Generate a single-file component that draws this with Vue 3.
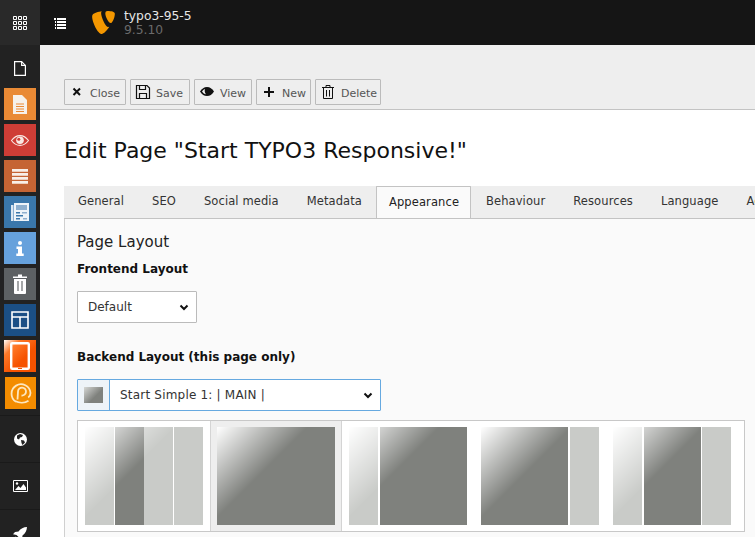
<script setup>
const buttons = [
  { label: 'Close', icon: 'close', width: 61.5 },
  { label: 'Save', icon: 'save', width: 59.5 },
  { label: 'View', icon: 'view', width: 57.5 },
  { label: 'New', icon: 'plus', width: 54.5 },
  { label: 'Delete', icon: 'trash', width: 66 }
]
const tabs = ['General', 'SEO', 'Social media', 'Metadata', 'Appearance', 'Behaviour', 'Resources', 'Language', 'Access']
const layouts = [
  { cols: [['l', 29], ['d', 29], ['m', 29], ['m', 29]] },
  { cols: [['d', 118]], active: true },
  { cols: [['l', 29], ['d', 87]] },
  { cols: [['d', 87], ['m', 29]] },
  { cols: [['l', 29], ['d', 57], ['m', 29]] }
]
</script>

<template>
  <div class="app">
    <aside class="sidebar">
      <div class="side-top">
        <svg width="14" height="14" viewBox="0 0 14 14"><path d="M.5.5h3v3h-3zM5.500.5h3v3h-3zM10.500.5h3v3h-3zM.5 5.500h3v3h-3zM5.500 5.500h3v3h-3zM10.500 5.500h3v3h-3zM.5 10.500h3v3h-3zM5.500 10.500h3v3h-3zM10.500 10.500h3v3h-3z" fill="none" stroke="#fff" stroke-width="1"/></svg>
      </div>
      <div class="side-doc">
        <svg width="12" height="15" viewBox="0 0 12 15"><path d="M.6.6h7l3.800 3.800v10H.6z" fill="#222" stroke="#fff" stroke-width="1.200"/><path d="M7.600.6v3.800h3.800" fill="none" stroke="#fff" stroke-width="1.100"/></svg>
      </div>
      <div class="mods">
        <div class="mod orange">
          <svg width="14" height="19" viewBox="0 0 14 19"><path d="M0 0h9l5 5v14H0z" fill="#f6f1ea"/><path d="M3 9h8M3 11.500h8M3 14h8M3 16.500h8" stroke="#e98a35" stroke-width="1.100"/></svg>
        </div>
        <div class="mod red">
          <svg width="18" height="11" viewBox="0 0 18 11"><path d="M.5 5.500C3 2 5.500.6 9 .6s6 1.400 8.500 4.900C15 9 12.500 10.400 9 10.400S3 9 .5 5.500z" fill="none" stroke="#f8e8e4" stroke-width="1.100"/><circle cx="9" cy="5.300" r="3.800" fill="#f8e8e4"/><circle cx="7.800" cy="4.300" r="1.500" fill="#cf3d36"/></svg>
        </div>
        <div class="mod brown">
          <svg width="16" height="15" viewBox="0 0 16 15" fill="#f8efe8"><path d="M0 0h16v2.800H0zM0 4h16v2.800H0zM0 8h16v2.800H0zM0 12h16v2.800H0z"/></svg>
        </div>
        <div class="mod blue">
          <svg width="18" height="18" viewBox="0 0 18 18"><path d="M0 2h2.500v16H0z" fill="#dbe7f2"/><path d="M3 0h15v18H3z" fill="#eef4f9"/><path d="M5 2h11v5H5z" fill="#8fb0cf"/><path d="M5 9h4v1.500H5zM5 12h7v1.500H5zM5 15h4v1.500H5z" fill="#3a77ab"/><path d="M11 9h5v1.500h-5zM12 15h4v1.500h-4z" fill="#8fb0cf"/></svg>
        </div>
        <div class="mod sky">
          <svg width="8" height="15" viewBox="0 0 8 15" fill="#fff"><circle cx="4" cy="2" r="2"/><path d="M.5 5.500H6v7h1.700V15H.3v-2.500H2V8H.5z"/></svg>
        </div>
        <div class="mod grey">
          <svg width="14" height="20" viewBox="0 0 14 20"><path d="M0 2.500h14V4H0zM5 .5h4v2H5z" fill="#fff"/><path d="M1 5h12v14a1 1 0 0 1-1 1H2a1 1 0 0 1-1-1z" fill="#fff"/><path d="M5 7v10M9 7v10" stroke="#5d6163" stroke-width="1.100"/></svg>
        </div>
        <div class="mod navy">
          <svg width="18" height="18" viewBox="0 0 18 18" fill="none" stroke="#fff" stroke-width="1.600"><path d="M1 1h16v16H1zM1 6h16M9 6v11"/></svg>
        </div>
        <div class="mod tablet">
          <svg width="20" height="28" viewBox="0 0 20 28"><rect x="1.200" y="1.200" width="17.600" height="25.600" rx="1" fill="none" stroke="#fff" stroke-width="2.400"/><path d="M8 26.500h4" stroke="#f65200" stroke-width="1"/></svg>
        </div>
        <div class="mod pown">
          <svg width="22" height="21" viewBox="0 0 22 21" fill="none" stroke="#fde7bf" stroke-width="1.800"><path d="M6 18.800A9.500 9.500 0 1 1 20.500 10c0 2-.8 3.500-2.300 4.500"/><path d="M7.500 16.500L8 8.500a4 4 0 1 1 3.500 4"/><path d="M5.500 18.300c4 2 9.500 1.700 13-.5"/></svg>
        </div>
      </div>
      <div class="side-row">
        <svg width="13" height="13" viewBox="0 0 13 13"><circle cx="6.500" cy="6.500" r="6.500" fill="#fff"/><path d="M3 2.500l3-1.500 3 1-1 2-2 .5-1 2-2-1zM7 7l3 .5 1 2-2.500 2.500L7.500 10z" fill="#222"/></svg>
      </div>
      <div class="side-row">
        <svg width="15" height="12" viewBox="0 0 15 12"><path d="M.5.5h14v11H.5z" fill="none" stroke="#fff"/><path d="M2 10l3.500-4 2 2 3-4L13 7.500V10z" fill="#fff"/><circle cx="4" cy="3.500" r="1.200" fill="#fff"/></svg>
      </div>
      <div class="side-row rocket">
        <svg width="14" height="14" viewBox="0 0 14 14" fill="#fff"><path d="M14 0c-.2 3.500-1.500 6.300-4.500 8.500L9 12 6.800 14 6 10.500 3.500 8 0 7.200 2 5l3.500-.5C7.700 1.500 10.500.2 14 0z"/><path d="M2.500 9.500L4.500 11.500 1 13z"/></svg>
      </div>
    </aside>

    <div class="main">
      <header class="topbar">
        <svg class="list-icon" width="12" height="11" viewBox="0 0 12 11" fill="#fff"><path d="M0 0h2v2H0zM3 0h9v2H3zM1 3h1v2H1zM3 3h9v2H3zM1 6h1v2H1zM3 6h9v2H3zM1 9h1v2H1zM3 9h9v2H3z"/></svg>
        <svg class="logo" width="23" height="23" viewBox="0 0 24 24" fill="#f49700"><path d="M18.080 16.539c-.356.105-.64.144-1.012.144-3.048 0-7.524-10.652-7.524-14.197 0-1.305.31-1.740.745-2.114C6.560.808 2.082 2.177.651 3.924c-.31.436-.497 1.120-.497 1.990C.154 11.447 6.064 24 10.233 24c1.928 0 5.181-3.170 7.847-7.461"/><path d="M16.136 0c3.855 0 7.710.622 7.710 2.798 0 4.415-2.800 9.765-4.230 9.765-2.549 0-5.720-7.090-5.720-9.641C13.896.747 14.702 0 16.136 0"/></svg>
        <div class="site">
          <div class="site-name">typo3-95-5</div>
          <div class="site-version">9.5.10</div>
        </div>
      </header>

      <div class="toolbar">
        <button v-for="b in buttons" :key="b.label" class="btn" :style="{ width: b.width + 'px' }">
          <svg v-if="b.icon === 'close'" class="ico" width="16" height="16" viewBox="0 0 16 16"><path d="M4.500 4.500l6.500 6.500M11 4.500L4.500 11" stroke="#111" stroke-width="2"/></svg>
          <svg v-else-if="b.icon === 'save'" class="ico" width="16" height="16" viewBox="0 0 16 16" fill="none" stroke="#111" stroke-width="1.200"><path d="M1.500 1.500h10.500l2.500 2.500v10.500h-13z"/><path d="M4.500 1.500v4h6v-4M4.500 14.500v-5h7v5"/></svg>
          <svg v-else-if="b.icon === 'view'" class="ico" width="16" height="16" viewBox="0 0 16 16"><path d="M1 7.500C3 4.500 5 3 8 3s5 1.500 7 4.500C13 10.500 11 12 8 12S3 10.500 1 7.500z" fill="#111"/><path d="M3 7.500C4.500 5.700 5.500 5 6 5c-.5 1.500-.5 3.500 1 5.200-1.500 0-3-1.200-4-2.700z" fill="#eee"/></svg>
          <svg v-else-if="b.icon === 'plus'" class="ico" width="16" height="16" viewBox="0 0 16 16"><path d="M8 3v10M3 8h10" stroke="#111" stroke-width="2"/></svg>
          <svg v-else class="ico" width="16" height="16" viewBox="0 0 16 16" fill="none" stroke="#111"><path d="M2 3.500h12M6 3.500v-2h4v2M3.500 3.500v11h9v-11M6.500 6v6.500M9.500 6v6.500"/></svg>
          <span>{{ b.label }}</span>
        </button>
      </div>

      <div class="content">
        <h1>Edit Page "Start TYPO3 Responsive!"</h1>
        <nav class="tabs">
          <div v-for="t in tabs" :key="t" class="tab" :class="{ active: t === 'Appearance' }">{{ t }}</div>
        </nav>
        <section class="panel">
          <h2>Page Layout</h2>
          <div class="label first">Frontend Layout</div>
          <div class="select small">
            <span>Default</span>
            <svg width="10" height="7" viewBox="0 0 10 7"><path d="M1.500 1.500L5 5l3.500-3.500" fill="none" stroke="#111" stroke-width="2"/></svg>
          </div>
          <div class="label second">Backend Layout (this page only)</div>
          <div class="select large">
            <div class="addon"><div class="thumb"></div></div>
            <div class="value">
              <span>Start Simple 1: | MAIN |</span>
              <svg width="10" height="7" viewBox="0 0 10 7"><path d="M1.500 1.500L5 5l3.500-3.500" fill="none" stroke="#111" stroke-width="2"/></svg>
            </div>
          </div>
          <div class="gallery">
            <div v-for="(l, i) in layouts" :key="i" class="cell" :class="{ on: l.active }">
              <div class="preview">
                <div v-for="(c, j) in l.cols" :key="j" class="col" :class="c[0]" :style="{ width: c[1] + 'px' }"></div>
                <div class="shine"></div>
              </div>
            </div>
          </div>
        </section>
      </div>
    </div>
  </div>
</template>

<style>
html, body { margin: 0; overflow: hidden; }
</style>

<style scoped>
.app {
  width: 755px;
  height: 537px;
  display: flex;
  overflow: hidden;
  background: #fff;
  font-family: "DejaVu Sans", sans-serif;
  color: #333;
}
.sidebar {
  width: 40px;
  height: 537px;
  overflow: hidden;
  flex: none;
  background: #222;
  display: flex;
  flex-direction: column;
  align-items: stretch;
}
.side-top {
  height: 45px;
  flex: none;
  display: flex;
  align-items: center;
  justify-content: center;
  background: #292929;
}
.side-doc {
  height: 43px;
  flex: none;
  display: flex;
  align-items: center;
  justify-content: center;
  padding-top: 3px;
  box-sizing: border-box;
}
.mods {
  flex: none;
  display: flex;
  flex-direction: column;
  align-items: center;
  gap: 4px;
  padding-bottom: 6px;
  border-bottom: 1px solid #1a1a1a;
}
.mod {
  width: 32px;
  height: 32px;
  flex: none;
  display: flex;
  align-items: center;
  justify-content: center;
}
.orange { background: #e98a35; }
.red { background: #cf3d36; }
.brown { background: #c56434; }
.blue { background: #3a77ab; }
.sky { background: #66a1dc; }
.grey { background: #5d6163; }
.navy { background: #1b4f85; }
.tablet { background: linear-gradient(135deg, #fff 0%, #ff7a2a 25%, #f65200 60%); }
.pown { background: #f38c00; width: 31px; margin: 1px 0 0 1px; }
.side-row {
  height: 47px;
  display: flex;
  align-items: center;
  justify-content: center;
  border-bottom: 1px solid #1a1a1a;
  flex: none;
  box-sizing: border-box;
}
.rocket { border-bottom: none; }
.main {
  flex: 1;
  min-width: 0;
  display: flex;
  flex-direction: column;
}
.topbar {
  height: 45px;
  flex: none;
  background: #151515;
  display: flex;
  align-items: center;
  padding-left: 14px;
  box-sizing: border-box;
}
.list-icon { margin-right: 26px; margin-top: 1px; }
.logo { margin-right: 9px; }
.site { font-size: 12.300px; line-height: 14px; margin-top: 1px; }
.site-name { color: #e6e6e6; }
.site-version { color: #6b6b6b; }
.toolbar {
  height: 65px;
  flex: none;
  box-sizing: border-box;
  background: #eee;
  border-bottom: 1px solid #c3c3c3;
  display: flex;
  align-items: flex-start;
  gap: 4.500px;
  padding: 34px 0 0 24px;
}
.btn {
  height: 26px;
  box-sizing: border-box;
  display: flex;
  align-items: center;
  gap: 5px;
  padding: 2px 0 0 4px;
  border: 1px solid #bbb;
  border-radius: 1px;
  background: #eee;
  color: #555;
  font-family: inherit;
  font-size: 11px;
}
.ico { flex: none; margin-top: -2px; }
.content {
  flex: 1;
  min-height: 0;
  padding: 0 0 0 24px;
}
h1 {
  margin: 26px 0 0;
  font-size: 22px;
  font-weight: 400;
  line-height: 30px;
  color: #111;
  white-space: nowrap;
}
.tabs {
  display: flex;
  margin-top: 20px;
  height: 33px;
  box-sizing: border-box;
  background: #eee;
  border-bottom: 1px solid #c3c3c3;
  white-space: nowrap;
  overflow: hidden;
}
.tab {
  padding: 0 14px;
  height: 32px;
  line-height: 30px;
  font-size: 11.500px;
  letter-spacing: .1px;
  color: #333;
  box-sizing: border-box;
  flex: none;
}
.tab.active {
  height: 33px;
  width: 95px;
  background: #fafafa;
  border: 1px solid #c3c3c3;
  border-bottom: none;
  border-top-left-radius: 1px;
  border-top-right-radius: 1px;
  color: #222;
  padding: 0 0 0 12px;
  margin-right: 1px;
}
.panel {
  background: #fafafa;
  border-left: 1px solid #d0d0d0;
  height: 400px;
  padding: 13px 0 0 12px;
  box-sizing: border-box;
}
h2 {
  margin: 0;
  font-size: 15px;
  font-weight: 400;
  line-height: 20px;
  color: #222;
}
.label {
  font-size: 12px;
  font-weight: 700;
  color: #111;
  line-height: 14px;
}
.label.first { margin-top: 10px; }
.label.second { margin-top: 27px; }
.select {
  box-sizing: border-box;
  display: flex;
  align-items: center;
  background: #fff;
  font-size: 12px;
  color: #333;
}
.small {
  width: 120px;
  height: 32px;
  margin-top: 15px;
  border: 1px solid #bbb;
  border-radius: 1px;
  justify-content: space-between;
  padding: 0 7px 0 10px;
}
.large {
  width: 304px;
  height: 32px;
  margin-top: 15px;
  border: 1px solid #66a9e0;
  border-radius: 1px;
}
.addon {
  width: 32px;
  height: 100%;
  flex: none;
  box-sizing: border-box;
  background: #eef3f8;
  border-right: 1px solid #66a9e0;
  display: flex;
  align-items: center;
  justify-content: center;
}
.thumb {
  width: 19px;
  height: 16px;
  background: linear-gradient(135deg, #d6d7d5 0%, #7f817d 60%);
}
.value {
  flex: 1;
  display: flex;
  align-items: center;
  justify-content: space-between;
  padding: 0 7px 0 10px;
  letter-spacing: .2px;
}
.gallery {
  display: flex;
  width: 668px;
  height: 112px;
  margin-top: 9px;
  box-sizing: border-box;
  border: 1px solid #c8c8c8;
  background: #fff;
}
.cell {
  width: 132px;
  flex: none;
  box-sizing: border-box;
  padding: 6px 0 0 7px;
}
.cell.on {
  width: 132px;
  background: #eee;
  border-left: 1px solid #d4d4d4;
  border-right: 1px solid #d4d4d4;
  padding-left: 6px;
}
.preview {
  position: relative;
  width: 118px;
  height: 98px;
  display: flex;
  justify-content: space-between;
  overflow: hidden;
}
.col { height: 100%; }
.l { background: #c9cbc8; }
.m { background: #c9cbc8; }
.d { background: #7f817d; }
.shine {
  position: absolute;
  inset: 0;
  background: linear-gradient(135deg, rgba(255, 255, 255, 1) 0%, rgba(255, 255, 255, 0) 42%);
}
</style>
